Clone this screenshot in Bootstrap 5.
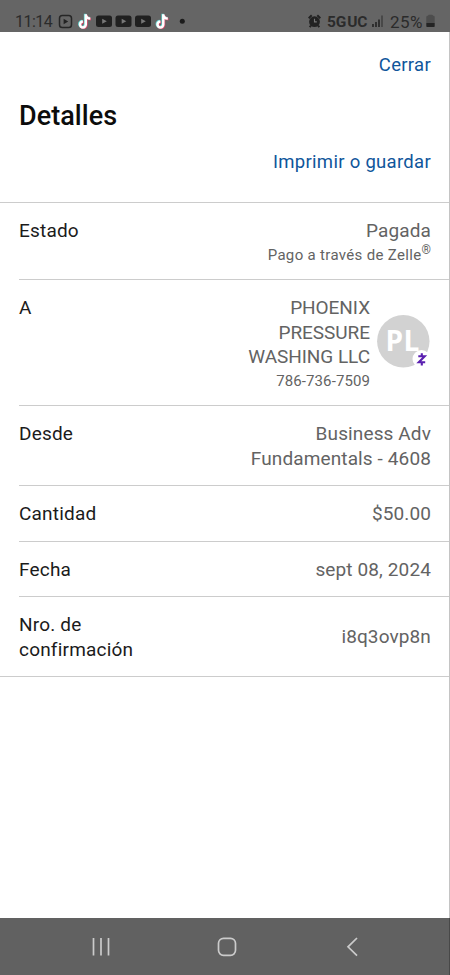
<!DOCTYPE html>
<html lang="es">
<head>
<meta charset="utf-8">
<meta name="viewport" content="width=device-width, initial-scale=1">
<title>Detalles</title>
<link href="https://cdn.jsdelivr.net/npm/bootstrap@5.3.0/dist/css/bootstrap.min.css" rel="stylesheet">
<style>
body{font-family:Roboto,"Liberation Sans",sans-serif;font-size:19px;line-height:24.4px;color:#1b1b1b;letter-spacing:.2px;overflow:hidden}
.screen{height:975px}
.status{height:32px;background:#656565;color:#2b2b2b;padding:11px 15px 0 15px;font-size:17px;line-height:22px;letter-spacing:0}
.status svg,.softnav svg{display:block;flex:none}
.time{font-size:16px;width:43px;letter-spacing:-.5px;white-space:nowrap}
.net{font-size:15.5px;letter-spacing:-.2px;word-spacing:-2.5px;margin:0 4px 0 6px;width:41px;white-space:nowrap}
.charge{margin-left:6px;width:36px;letter-spacing:.4px}
.sheet{border-right:1px solid #c4c4c4}
.action{color:#10569b;font-size:18.5px;letter-spacing:.3px}
.top-area{height:171px;padding:20.500px 18px 0 19px;border-bottom:1px solid #ccc}
.title{font-size:27px;line-height:32px;font-weight:500;color:#0c0c0c;margin:23px 0 18px;letter-spacing:.05px}
.line-item{border-bottom:1px solid #ccc;padding:16.400px 18px 0 0}
.details{padding-left:19px;border-bottom:1px solid #ccc}
.line-item:last-child{border-bottom:0}
.value{color:#636363;letter-spacing:.12px}
.payee{letter-spacing:-.05px}
.note{font-size:15px;line-height:22.400px;letter-spacing:.33px}
.phone{letter-spacing:.1px}
.note sup{font-size:12px;top:-.45em;line-height:0;letter-spacing:0}
.h-a{height:77px}.h-b{height:126px}.h-c{height:80px}.h-d{height:55.5px}.h-e{height:79px}
.avatar{width:53px;height:53px;margin:18.600px 1px 0 7px}
.softnav{height:57px;background:#616161;padding:19px 91px 0 92px;border-right:1px solid #484848}
.home-key{margin-right:3px}
</style>
<script src="https://cdn.jsdelivr.net/npm/bootstrap@5.3.0/dist/js/bootstrap.bundle.min.js"></script>
</head>
<body>
<div class="screen d-flex flex-column">
<header class="status d-flex justify-content-between">
  <div class="d-flex">
    <span class="time">11:14</span>
    <svg width="130" height="18" viewBox="58 11.500 130 18">
      <defs>
        <g id="tube"><rect width="16" height="11.500" rx="2.500" fill="#202020"/><path d="M6.200 3.300v5l4.600-2.500z" fill="#777"/></g>
        <path id="tok" d="M7.300 0v10.200a2.900 2.900 0 1 1-2.900-2.900M7.300 .3c.2 2.300 1.900 3.900 4.500 4" fill="none" stroke-width="2.500"/>
        <g id="toktok"><use href="#tok" x="-.7" y="-.5" stroke="#5fd3cf"/><use href="#tok" x=".7" y=".6" stroke="#d8486a"/><use href="#tok" stroke="#fff"/></g>
      </defs>
      <rect x="59.500" y="16" width="12" height="12" rx="2.800" fill="none" stroke="#262626" stroke-width="1.500"/><path d="M63.600 19.300v5.400l4.600-2.700z" fill="#222"/>
      <use href="#toktok" x="78.500" y="14.800"/>
      <use href="#tube" x="96" y="15.900"/><use href="#tube" x="115.500" y="15.900"/><use href="#tube" x="135" y="15.900"/>
      <use href="#toktok" x="156" y="14.800"/>
      <circle cx="182.300" cy="21.700" r="2.500" fill="#1c1c1c"/>
    </svg>
  </div>
  <div class="d-flex">
    <svg width="13" height="18" viewBox="0 0 13 18"><circle cx="6.500" cy="10.700" r="5.400" fill="#222"/><path d="M.7 7.200l3-2.900M12.300 7.200l-3-2.900M3 14.500l-1.300 1.700M10 14.500l1.300 1.700" stroke="#222" stroke-width="2"/><path d="M6.500 7.800v3.100h2.300" fill="none" stroke="#777" stroke-width="1.100"/></svg>
    <span class="net fw-bold">5G UC</span>
    <svg width="12" height="18" viewBox="0 0 12 18"><path d="M1 13v3M4 11v5M7 8.500v7.500" stroke="#2b2b2b" stroke-width="1.800"/><path d="M10 4.500v11.500" stroke="#444" stroke-width="1.700"/></svg>
    <span class="charge">25%</span>
    <svg width="9" height="18" viewBox="0 0 9 18"><path d="M.3 6q0-1.200 1.500-1.200l1-1h3.400l1 1q1.500 0 1.500 1.200v6H.3z" fill="#4d4d4d"/><path d="M.3 12h8.400v3.200q0 .8-.8.800H1.100q-.8 0-.8-.8z" fill="#242424"/></svg>
  </div>
</header>
<main class="sheet bg-white flex-grow-1">
  <section class="top-area">
    <div class="text-end"><a class="action text-decoration-none" href="#">Cerrar</a></div>
    <h1 class="title">Detalles</h1>
    <div class="text-end"><a class="action text-decoration-none" href="#">Imprimir o guardar</a></div>
  </section>
  <section class="details">
    <div class="line-item h-a d-flex justify-content-between"><div>Estado</div><div class="value text-end">Pagada<div class="note">Pago a través de Zelle<sup>®</sup></div></div></div>
    <div class="line-item h-b d-flex justify-content-between"><div>A</div><div class="d-flex value text-end"><div class="payee">PHOENIX<br>PRESSURE<br>WASHING LLC<div class="note phone">786-736-7509</div></div>
    <svg class="avatar" viewBox="0 0 53 53"><circle cx="26.300" cy="26.300" r="26.200" fill="#d2d2d2"/><text x="8.500" y="36" font-family="Open Sans, sans-serif" font-size="28" font-weight="700" fill="#fff" textLength="34">PL</text><circle cx="44.500" cy="44" r="9" fill="#fff"/><path d="M41.300 41.300h6.400l-5.900 6h6.400M44.800 38.200v3M44.800 47.300v3.100" fill="none" stroke="#5a1fb0" stroke-width="2.100"/></svg></div></div>
    <div class="line-item h-c d-flex justify-content-between"><div>Desde</div><div class="value text-end">Business Adv<br>Fundamentals - 4608</div></div>
    <div class="line-item h-d d-flex justify-content-between"><div>Cantidad</div><div class="value">$50.00</div></div>
    <div class="line-item h-d d-flex justify-content-between"><div>Fecha</div><div class="value">sept 08, 2024</div></div>
    <div class="line-item h-e d-flex justify-content-between"><div>Nro. de<br>confirmación</div><div class="value mt-2 pt-1">i8q3ovp8n</div></div>
  </section>
</main>
<footer class="softnav d-flex justify-content-between">
  <svg width="18" height="20" viewBox="0 0 18 20"><path d="M1.500 1v17.500M9 1v17.500M16.500 1v17.500" stroke="#cbcbcb" stroke-width="1.700"/></svg>
  <svg class="home-key" width="20" height="20" viewBox="0 0 20 20"><rect x="1.500" y="1.300" width="17" height="17" rx="5" fill="none" stroke="#cbcbcb" stroke-width="1.700"/></svg>
  <svg width="12" height="20" viewBox="0 0 12 20"><path d="M11 1L2 9.800l9 8.900" fill="none" stroke="#cbcbcb" stroke-width="1.700"/></svg>
</footer>
</div>
</body>
</html>
